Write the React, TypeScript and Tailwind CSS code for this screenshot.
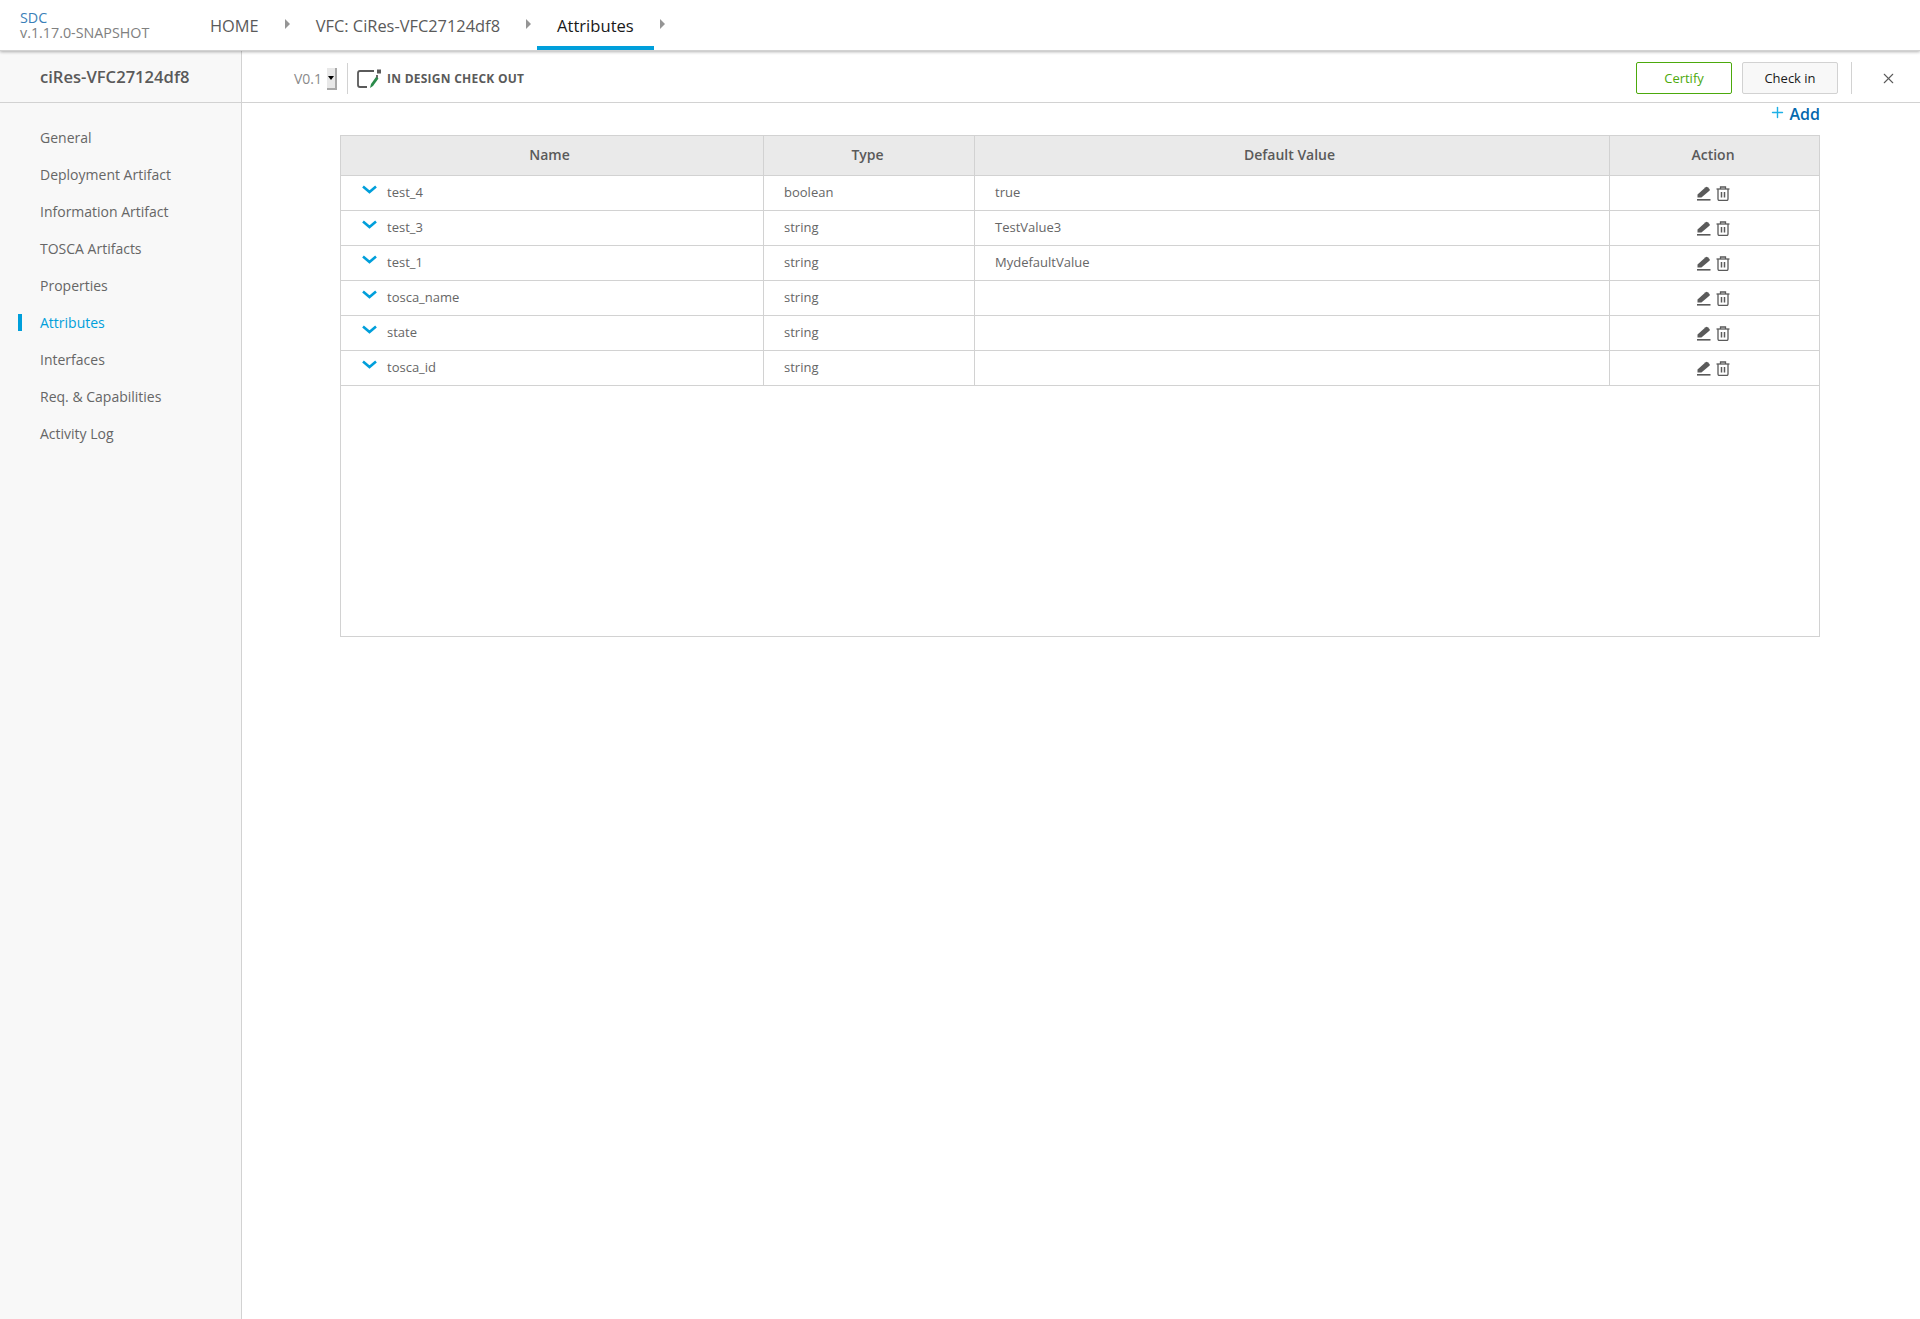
import { X, Plus } from "lucide-react";

const sideItems = [
  "General",
  "Deployment Artifact",
  "Information Artifact",
  "TOSCA Artifacts",
  "Properties",
  "Attributes",
  "Interfaces",
  "Req. & Capabilities",
  "Activity Log",
];

const rows = [
  { name: "test_4", type: "boolean", value: "true" },
  { name: "test_3", type: "string", value: "TestValue3" },
  { name: "test_1", type: "string", value: "MydefaultValue" },
  { name: "tosca_name", type: "string", value: "" },
  { name: "state", type: "string", value: "" },
  { name: "tosca_id", type: "string", value: "" },
];

function Crumb({ label, active }: { label: string; active?: boolean }) {
  return (
    <div className="flex items-center h-full">
      <div
        className={`h-full flex items-center px-5 pt-[6px] border-b-4 ${
          active ? "text-[16.6px] border-[#009fdb] text-[#191919]" : "text-[16.4px] border-transparent text-[#5a5a5a]"
        }`}
      >
        {label}
      </div>
      <svg width="5" height="10" viewBox="0 0 5 10" className="mb-[3px] mx-[6px]">
        <path d="M0 0 L5 5 L0 10 Z" fill="#959595" />
      </svg>
    </div>
  );
}

function EditIcon() {
  return (
    <svg width="14" height="15" viewBox="0 0 14 15">
      <path d="M0.5 11.5 L0.5 8.6 L8.6 1.2 Q9.6 0.3 10.6 1.2 L12.5 3 Q13.3 4 12.4 4.8 L4.4 11.5 Z" fill="#5a5a5a" />
      <rect x="0" y="13" width="13.5" height="1.6" fill="#5a5a5a" />
    </svg>
  );
}

function TrashIcon() {
  return (
    <svg width="14" height="15" viewBox="0 0 14 15" fill="none" stroke="#5a5a5a" strokeWidth="1.3">
      <path d="M0.5 3 H13.5" />
      <path d="M4.5 3 V1 H9.5 V3" />
      <path d="M2 3 V13 Q2 14.5 3.5 14.5 H10.5 Q12 14.5 12 13 V3" />
      <path d="M5.5 6 V11.5 M8.5 6 V11.5" strokeWidth="1.5" />
    </svg>
  );
}

export default function App() {
  return (
    <div className="min-h-[1319px] flex flex-col bg-white font-['Open_Sans',sans-serif] overflow-hidden">
      {/* top bar */}
      <header className="h-[51px] flex items-stretch bg-white border-b border-[#d2d2d2] shadow-[0_1px_3px_rgba(0,0,0,0.3)] relative z-10">
        <div className="w-[190px] pl-5 pt-[10px] text-[14.3px] leading-[15px]">
          <div className="text-[#3a7fb8]">SDC</div>
          <div className="text-[#808080]">v.1.17.0-SNAPSHOT</div>
        </div>
        <nav className="flex items-stretch h-[50px]">
          <Crumb label="HOME" />
          <Crumb label="VFC: CiRes-VFC27124df8" />
          <Crumb label="Attributes" active />
        </nav>
      </header>

      <div className="flex flex-1">
        {/* sidebar */}
        <aside className="w-[242px] shrink-0 bg-[#f8f8f8] border-r border-[#d2d2d2]">
          <div className="h-[52px] flex items-center pl-10 pt-[2px] border-b border-[#d2d2d2] text-[16.6px] font-semibold text-[#5a5a5a]">
            ciRes-VFC27124df8
          </div>
          <ul className="pt-4 text-sm">
            {sideItems.map((item) => (
              <li
                key={item}
                className={`relative h-[37px] flex items-center pl-10 ${
                  item === "Attributes" ? "text-[#009fdb]" : "text-[#666666]"
                }`}
              >
                {item === "Attributes" && (
                  <span className="absolute left-[18px] top-[10px] w-1 h-[17px] bg-[#009fdb]" />
                )}
                {item}
              </li>
            ))}
          </ul>
        </aside>

        {/* main */}
        <main className="flex-1 min-w-0">
          <div className="h-[52px] flex items-center border-b border-[#d2d2d2] pt-[3px] pl-[52px] pr-[23px]">
            <div className="flex items-center mt-[1px]">
              <span className="text-sm text-[#8a8a8a] mr-[5px]">V0.1</span>
              <span className="w-[10px] h-[22px] flex items-center justify-center bg-[#e8e8e8] border-r-2 border-b-2 border-[#a8a8a8] mr-[10px]">
                <svg width="6" height="4" viewBox="0 0 6 4">
                  <path d="M0 0 H6 L3 4 Z" fill="#000" />
                </svg>
              </span>
              <span className="w-px h-[31px] bg-[#d2d2d2] mr-[9px]" />
              <svg width="25" height="20" viewBox="0 0 25 20" fill="none" className="mr-[5px]">
                <path d="M17 2 H3 Q1 2 1 4 V16 Q1 18 3 18 H10" stroke="#5a5a5a" strokeWidth="1.8" />
                <path d="M20 6 V9" stroke="#5a5a5a" strokeWidth="1.8" />
                <rect x="20" y="0.5" width="4" height="4" fill="#5a5a5a" />
                <path d="M13 19 L14 15 L19 8 L21.5 9.5 L16 17 Z" fill="#2a8a4a" />
              </svg>
              <span className="text-xs font-bold text-[#5a5a5a] tracking-[0.25px]">IN DESIGN CHECK OUT</span>
            </div>

            <div className="ml-auto flex items-center">
              <button className="w-[96px] h-[32px] pt-[1px] rounded-[2px] border border-[#4ca90c] bg-white text-[13px] font-medium text-[#4ca90c] mr-[10px]">
                Certify
              </button>
              <button className="w-[96px] h-[32px] pt-[1px] rounded-[2px] border border-[#d2d2d2] bg-[#f8f8f8] text-[13px] font-medium text-[#191919] mr-[13px]">
                Check in
              </button>
              <span className="w-px h-[32px] bg-[#d2d2d2] mr-[28px]" />
              <X size={17} strokeWidth={1.5} className="text-[#5a5a5a]" />
            </div>
          </div>

          <div className="pl-[98px] pr-[100px]">
            <div className="h-[32px] pb-[10px] flex items-center justify-end text-base font-semibold text-[#0568ae]">
              <Plus size={17} strokeWidth={2} className="text-[#1eb0e6] mr-[4px] mb-[3px]" />
              Add
            </div>
            <div className="h-[502px] border border-[#d2d2d2]">
              <div className="flex h-[40px] bg-[#eaeaea] border-b border-[#d2d2d2] text-sm font-semibold text-[#5a5a5a]">
                <div className="w-[423px] flex items-center justify-center pr-[5px] pb-[2px] border-r border-[#d2d2d2]">Name</div>
                <div className="w-[211px] flex items-center justify-center pr-[3px] pb-[2px] border-r border-[#d2d2d2]">Type</div>
                <div className="w-[635px] flex items-center justify-center pr-[5px] pb-[2px] border-r border-[#d2d2d2]">Default Value</div>
                <div className="flex-1 flex items-center justify-center pr-[3px] pb-[2px]">Action</div>
              </div>
              {rows.map((row) => (
                <div key={row.name} className="flex h-[35px] border-b border-[#d2d2d2] text-[13px] text-[#666666]">
                  <div className="w-[423px] flex items-center pl-[21px] border-r border-[#d2d2d2]">
                    <svg width="15" height="9" viewBox="0 0 15 9" fill="none" className="mr-[10px] mb-[7px]">
                      <path d="M1 1.5 L7.5 7 L14 1.5" stroke="#009fdb" strokeWidth="2.6" />
                    </svg>
                    {row.name}
                  </div>
                  <div className="w-[211px] flex items-center pl-5 border-r border-[#d2d2d2]">{row.type}</div>
                  <div className="w-[635px] flex items-center pl-5 border-r border-[#d2d2d2]">{row.value}</div>
                  <div className="flex-1 flex items-center justify-center gap-[5px] pr-[3px]">
                    <EditIcon />
                    <TrashIcon />
                  </div>
                </div>
              ))}
            </div>
          </div>
        </main>
      </div>
    </div>
  );
}
